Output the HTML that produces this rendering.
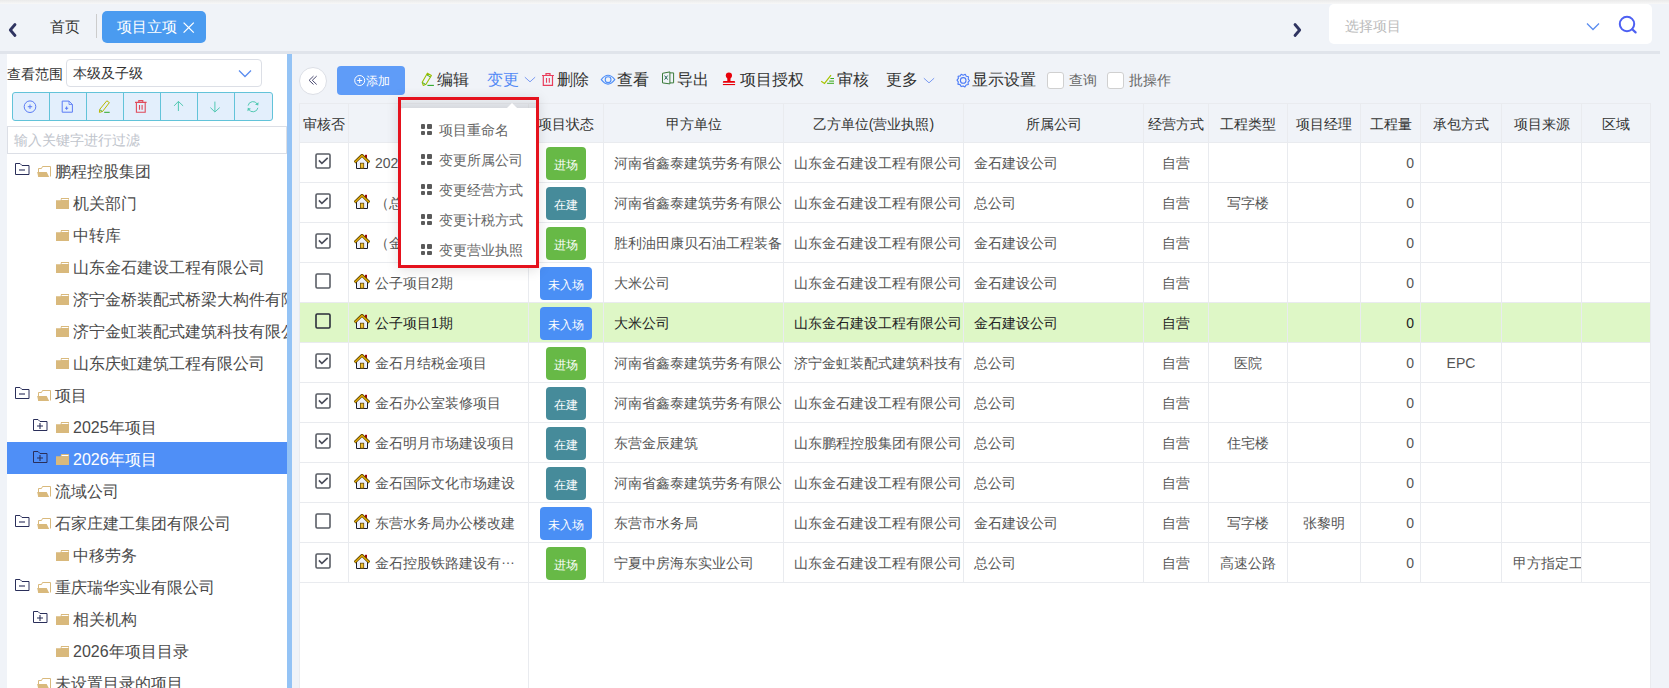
<!DOCTYPE html><html><head><meta charset="utf-8"><style>
*{box-sizing:border-box;margin:0;padding:0}
html,body{width:1669px;height:688px;overflow:hidden}
body{background:#f0f3f8;font-family:"Liberation Sans",sans-serif;color:#333;position:relative}
.abs{position:absolute}
svg{display:block}
#topstrip{left:0;top:0;width:1669px;height:4px;background:linear-gradient(#eaeaea,#f8f8f8)}
#sep{left:0;top:51px;width:1660px;height:3px;background:#e0e4eb}
#home{left:50px;top:16px;font-size:15px;line-height:22px;color:#333}
#vsep{left:96px;top:14px;width:1px;height:24px;background:#ccc}
#tab{left:102px;top:11px;width:104px;height:32px;background:#4a9bf0;border-radius:5px;color:#fff;font-size:15px;line-height:32px;padding-left:15px}
#search{left:1329px;top:4px;width:323px;height:40px;background:#fff;border-radius:5px}
#search .ph{position:absolute;left:16px;top:11px;font-size:14px;line-height:22px;color:#bbb}
#left{left:7px;top:54px;width:280px;height:634px;background:#fff;overflow:hidden}
#splitter{left:287px;top:54px;width:5px;height:634px;background:#94c3f5}
.lab{position:absolute;left:0.2px;font-size:13.6px;line-height:20px;color:#333}
#sel{left:59px;top:5px;width:196px;height:28px;border:1px solid #dcdfe6;border-radius:4px;background:#fff}
#sel .v{position:absolute;left:6px;top:3px;font-size:14px;line-height:20px;color:#333}
#btns{left:5px;top:38px;width:261px;height:29px;border:1px solid #62c3d9;border-radius:3px;background:#e3effc;display:flex}
#btns div{width:37px;height:27px;border-right:1px solid #62c3d9;position:relative}
#btns div:last-child{border-right:none}
#btns svg{position:absolute;left:11px;top:6px;overflow:visible}
#filter{left:0;top:72px;width:280px;height:28px;border:1px solid #dcdfe6;background:#fff}
#filter span{position:absolute;left:6px;top:3px;font-size:14px;line-height:20px;color:#c0c4cc}
.tree{position:absolute;left:0;top:100px;width:280px}
.tn{position:relative;height:32px;font-size:16px;line-height:32px;color:#4a4a4a;white-space:nowrap}
.tn.on{background:#4f8ff7;color:#fff}
.tn .t{position:absolute;top:1.6px}
.tn svg{position:absolute}
.tb{position:absolute;font-size:16px;line-height:22px;color:#333;white-space:nowrap}
.tbi{position:absolute}
#grid{left:299px;top:103px;width:1352px;height:585px;background:#fff}
.hl{position:absolute;height:1px;background:#e9ebef}
.vl{position:absolute;width:1px;background:#e9ebef}
.cell{position:absolute;height:39px;font-size:14px;line-height:39px;color:#555;white-space:nowrap;overflow:hidden}
.hd{color:#333}
.badge{position:absolute;height:33px;border-radius:4px;color:#fff;font-size:12px;font-weight:500;line-height:36px;text-align:center}
.g{background:#67b946}.tl{background:#468b9a}.bl{background:#4a8ff5}
.cb{position:absolute;width:15px;height:15px;border:2px solid #5d5d5d;border-radius:2px;background:#fff}
#popup{left:398px;top:97px;width:141px;height:171px}
.mi{position:absolute;left:40.5px;font-size:14px;line-height:20px;color:#666;white-space:nowrap}
.gi{position:absolute;left:22.5px;width:11px;height:11px}
.gi i{position:absolute;width:4.5px;height:4.5px;background:#5a5a5a;border-radius:1px}
</style></head><body>
<div id="topstrip" class="abs"></div>
<svg class="abs" style="left:8px;top:22px" width="10" height="16" viewBox="0 0 10 16"><path d="M7 2.5 L2.3 8 L7 13.5" stroke="#2f3461" stroke-width="2.8" fill="none" stroke-linecap="round" stroke-linejoin="round"/></svg>
<div id="home" class="abs">首页</div><div id="vsep" class="abs"></div>
<div id="tab" class="abs">项目立项<svg class="abs" style="left:81px;top:11px" width="12" height="12" viewBox="0 0 12 12"><path d="M0.6 0.6L10.8 10.6M10.8 0.6L0.6 10.6" stroke="#fff" stroke-width="1.3"/></svg></div>
<svg class="abs" style="left:1292px;top:22px" width="10" height="16" viewBox="0 0 10 16"><path d="M3 2.5 L7.7 8 L3 13.5" stroke="#2f3461" stroke-width="2.8" fill="none" stroke-linecap="round" stroke-linejoin="round"/></svg>
<div id="search" class="abs"><span class="ph">选择项目</span><svg class="abs" style="left:257px;top:18px" width="14" height="9" viewBox="0 0 14 9"><path d="M1 1.5 L7 7.5 L13 1.5" stroke="#5b8def" stroke-width="1.3" fill="none"/></svg><svg class="abs" style="left:289px;top:11px" width="20" height="20" viewBox="0 0 20 20"><circle cx="9" cy="9" r="7.2" stroke="#4d60f2" stroke-width="2" fill="none"/><path d="M14.2 14.2 L17.6 17.4" stroke="#4d60f2" stroke-width="2.2" stroke-linecap="round"/></svg></div>
<div id="sep" class="abs"></div>
<div id="left" class="abs">
<div class="lab" style="top:11px">查看范围</div>
<div id="sel" class="abs"><span class="v">本级及子级</span><svg class="abs" style="left:171px;top:9px" width="14" height="9" viewBox="0 0 14 9"><path d="M1 1.5 L7 7.5 L13 1.5" stroke="#5b8def" stroke-width="1.3" fill="none"/></svg></div>
<div id="btns" class="abs">
<div><svg width="16" height="16" viewBox="0 0 16 16"><circle cx="6" cy="7.7" r="5.8" stroke="#5b7cf5" stroke-width="1" fill="none"/><path d="M6 5.5V9.9M3.8 7.7H8.2" stroke="#5b7cf5" stroke-width="1"/></svg></div>
<div><svg width="16" height="16" viewBox="0 0 16 16"><path d="M1.2 2.1H8L11.4 5.5V13.2H1.2Z" stroke="#5b7cf5" stroke-width="1" fill="none" stroke-linejoin="round"/><path d="M8 2.1V5.5H11.4" stroke="#5b7cf5" stroke-width=".8" fill="none"/><path d="M5.6 7.6V10.8M4 9.2H7.2" stroke="#5b7cf5" stroke-width="1.1"/></svg></div>
<div><svg width="16" height="16" viewBox="0 0 16 16"><path d="M8.8 1.8L11.4 3.6L4.6 12.4L1.4 13.4L1.7 10.4Z" stroke="#b8b800" stroke-width="1" fill="none" stroke-linejoin="round"/><path d="M1.9 10.8L4.3 12.4" stroke="#3aa82a" stroke-width=".9"/><path d="M6.2 13.3H11.7" stroke="#2ea82a" stroke-width="1"/></svg></div>
<div><svg width="16" height="16" viewBox="0 0 16 16"><path d="M0 3.4H11.6M3.8 3.4V1.6H7.8V3.4" stroke="#e04a5a" stroke-width="1.1" fill="none"/><path d="M1.4 3.4V13.2H10.2V3.4" stroke="#e04a5a" stroke-width="1.1" fill="none"/><path d="M4.5 6v4.8M7.1 6v4.8" stroke="#e04a5a" stroke-width="1.1"/></svg></div>
<div><svg width="16" height="16" viewBox="0 0 16 16"><path d="M6.4 2.4V12M2.1 6.9L6.4 2.4L11.1 6.9" stroke="#52c9b3" stroke-width="1" fill="none"/></svg></div>
<div><svg width="16" height="16" viewBox="0 0 16 16"><path d="M5.9 2.6V12.8M1.4 8.6L5.9 13L10.7 8.6" stroke="#52c9b3" stroke-width="1" fill="none"/></svg></div>
<div><svg width="16" height="16" viewBox="0 0 16 16"><path d="M2.1 6.6A5 5 0 0 1 11.4 5.2M11.9 8.8A5 5 0 0 1 2.6 10.2" stroke="#52c9b3" stroke-width="1" fill="none"/><path d="M12.6 3.2L12.2 6.6L9 5.6ZM1.4 12.2L1.8 8.8L5 9.8Z" fill="#52c9b3"/></svg></div>
</div>
<div id="filter" class="abs"><span>输入关键字进行过滤</span></div>
<div class="tree">
<div class="tn"><svg style="left:8px;top:9px" width="15" height="13" viewBox="0 0 15 13"><path d="M0.5 0.5h4.5l2 2h7v9h-13.5z" stroke="#2a2f5a" stroke-width="1" fill="none"/><path d="M4 7h6" stroke="#2a2f5a" stroke-width="1.1"/></svg><svg style="left:30px;top:11px" width="15" height="13" viewBox="0 0 15 13"><path d="M1.5 11.5V3.5H4.5L5.5 1.5H13.5V11.5" stroke="#d9b97c" stroke-width="1" fill="none"/><path d="M0.2 7H9.7L12.2 11.9H1.2Z" fill="#d9b97c"/></svg><span class="t" style="left:48px">鹏程控股集团</span></div>
<div class="tn"><svg style="left:49px;top:12px" width="13" height="11" viewBox="0 0 13 11"><path d="M0 2.2H4.6L5 0H13V11H0Z" fill="#d9b97c"/><path d="M5.6 1.5H12.4" stroke="#fff" stroke-width="1"/></svg><span class="t" style="left:66px">机关部门</span></div>
<div class="tn"><svg style="left:49px;top:12px" width="13" height="11" viewBox="0 0 13 11"><path d="M0 2.2H4.6L5 0H13V11H0Z" fill="#d9b97c"/><path d="M5.6 1.5H12.4" stroke="#fff" stroke-width="1"/></svg><span class="t" style="left:66px">中转库</span></div>
<div class="tn"><svg style="left:49px;top:12px" width="13" height="11" viewBox="0 0 13 11"><path d="M0 2.2H4.6L5 0H13V11H0Z" fill="#d9b97c"/><path d="M5.6 1.5H12.4" stroke="#fff" stroke-width="1"/></svg><span class="t" style="left:66px">山东金石建设工程有限公司</span></div>
<div class="tn"><svg style="left:49px;top:12px" width="13" height="11" viewBox="0 0 13 11"><path d="M0 2.2H4.6L5 0H13V11H0Z" fill="#d9b97c"/><path d="M5.6 1.5H12.4" stroke="#fff" stroke-width="1"/></svg><span class="t" style="left:66px">济宁金桥装配式桥梁大构件有限公司</span></div>
<div class="tn"><svg style="left:49px;top:12px" width="13" height="11" viewBox="0 0 13 11"><path d="M0 2.2H4.6L5 0H13V11H0Z" fill="#d9b97c"/><path d="M5.6 1.5H12.4" stroke="#fff" stroke-width="1"/></svg><span class="t" style="left:66px">济宁金虹装配式建筑科技有限公司</span></div>
<div class="tn"><svg style="left:49px;top:12px" width="13" height="11" viewBox="0 0 13 11"><path d="M0 2.2H4.6L5 0H13V11H0Z" fill="#d9b97c"/><path d="M5.6 1.5H12.4" stroke="#fff" stroke-width="1"/></svg><span class="t" style="left:66px">山东庆虹建筑工程有限公司</span></div>
<div class="tn"><svg style="left:8px;top:9px" width="15" height="13" viewBox="0 0 15 13"><path d="M0.5 0.5h4.5l2 2h7v9h-13.5z" stroke="#2a2f5a" stroke-width="1" fill="none"/><path d="M4 7h6" stroke="#2a2f5a" stroke-width="1.1"/></svg><svg style="left:30px;top:11px" width="15" height="13" viewBox="0 0 15 13"><path d="M1.5 11.5V3.5H4.5L5.5 1.5H13.5V11.5" stroke="#d9b97c" stroke-width="1" fill="none"/><path d="M0.2 7H9.7L12.2 11.9H1.2Z" fill="#d9b97c"/></svg><span class="t" style="left:48px">项目</span></div>
<div class="tn"><svg style="left:26px;top:9px" width="15" height="13" viewBox="0 0 15 13"><path d="M0.5 0.5h4.5l2 2h7v9h-13.5z" stroke="#2a2f5a" stroke-width="1" fill="none"/><path d="M4 7h6M7 4v6" stroke="#2a2f5a" stroke-width="1.1"/></svg><svg style="left:49px;top:12px" width="13" height="11" viewBox="0 0 13 11"><path d="M0 2.2H4.6L5 0H13V11H0Z" fill="#d9b97c"/><path d="M5.6 1.5H12.4" stroke="#fff" stroke-width="1"/></svg><span class="t" style="left:66px">2025年项目</span></div>
<div class="tn on"><svg style="left:26px;top:9px" width="15" height="13" viewBox="0 0 15 13"><path d="M0.5 0.5h4.5l2 2h7v9h-13.5z" stroke="#2a2f5a" stroke-width="1" fill="none"/><path d="M4 7h6M7 4v6" stroke="#2a2f5a" stroke-width="1.1"/></svg><svg style="left:49px;top:12px" width="13" height="11" viewBox="0 0 13 11"><path d="M0 2.2H4.6L5 0H13V11H0Z" fill="#d9b97c"/><path d="M5.6 1.5H12.4" stroke="#fff" stroke-width="1"/></svg><span class="t" style="left:66px">2026年项目</span></div>
<div class="tn"><svg style="left:30px;top:11px" width="15" height="13" viewBox="0 0 15 13"><path d="M1.5 11.5V3.5H4.5L5.5 1.5H13.5V11.5" stroke="#d9b97c" stroke-width="1" fill="none"/><path d="M0.2 7H9.7L12.2 11.9H1.2Z" fill="#d9b97c"/></svg><span class="t" style="left:48px">流域公司</span></div>
<div class="tn"><svg style="left:8px;top:9px" width="15" height="13" viewBox="0 0 15 13"><path d="M0.5 0.5h4.5l2 2h7v9h-13.5z" stroke="#2a2f5a" stroke-width="1" fill="none"/><path d="M4 7h6" stroke="#2a2f5a" stroke-width="1.1"/></svg><svg style="left:30px;top:11px" width="15" height="13" viewBox="0 0 15 13"><path d="M1.5 11.5V3.5H4.5L5.5 1.5H13.5V11.5" stroke="#d9b97c" stroke-width="1" fill="none"/><path d="M0.2 7H9.7L12.2 11.9H1.2Z" fill="#d9b97c"/></svg><span class="t" style="left:48px">石家庄建工集团有限公司</span></div>
<div class="tn"><svg style="left:49px;top:12px" width="13" height="11" viewBox="0 0 13 11"><path d="M0 2.2H4.6L5 0H13V11H0Z" fill="#d9b97c"/><path d="M5.6 1.5H12.4" stroke="#fff" stroke-width="1"/></svg><span class="t" style="left:66px">中移劳务</span></div>
<div class="tn"><svg style="left:8px;top:9px" width="15" height="13" viewBox="0 0 15 13"><path d="M0.5 0.5h4.5l2 2h7v9h-13.5z" stroke="#2a2f5a" stroke-width="1" fill="none"/><path d="M4 7h6" stroke="#2a2f5a" stroke-width="1.1"/></svg><svg style="left:30px;top:11px" width="15" height="13" viewBox="0 0 15 13"><path d="M1.5 11.5V3.5H4.5L5.5 1.5H13.5V11.5" stroke="#d9b97c" stroke-width="1" fill="none"/><path d="M0.2 7H9.7L12.2 11.9H1.2Z" fill="#d9b97c"/></svg><span class="t" style="left:48px">重庆瑞华实业有限公司</span></div>
<div class="tn"><svg style="left:26px;top:9px" width="15" height="13" viewBox="0 0 15 13"><path d="M0.5 0.5h4.5l2 2h7v9h-13.5z" stroke="#2a2f5a" stroke-width="1" fill="none"/><path d="M4 7h6M7 4v6" stroke="#2a2f5a" stroke-width="1.1"/></svg><svg style="left:49px;top:12px" width="13" height="11" viewBox="0 0 13 11"><path d="M0 2.2H4.6L5 0H13V11H0Z" fill="#d9b97c"/><path d="M5.6 1.5H12.4" stroke="#fff" stroke-width="1"/></svg><span class="t" style="left:66px">相关机构</span></div>
<div class="tn"><svg style="left:49px;top:12px" width="13" height="11" viewBox="0 0 13 11"><path d="M0 2.2H4.6L5 0H13V11H0Z" fill="#d9b97c"/><path d="M5.6 1.5H12.4" stroke="#fff" stroke-width="1"/></svg><span class="t" style="left:66px">2026年项目目录</span></div>
<div class="tn"><svg style="left:30px;top:11px" width="15" height="13" viewBox="0 0 15 13"><path d="M1.5 11.5V3.5H4.5L5.5 1.5H13.5V11.5" stroke="#d9b97c" stroke-width="1" fill="none"/><path d="M0.2 7H9.7L12.2 11.9H1.2Z" fill="#d9b97c"/></svg><span class="t" style="left:48px">未设置目录的项目</span></div>
</div></div>
<div id="splitter" class="abs"></div>
<div class="abs" style="left:299px;top:67px;width:28px;height:28px;border:1px solid #dcdfe6;border-radius:50%;background:#fff"></div><svg class="abs" style="left:304px;top:70px" width="16" height="16" viewBox="0 0 16 16"><path d="M9.5 6.1L5.1 10.3L9.5 14.5M12.7 6.1L8.3 10.3L12.7 14.5" stroke="#4a4a70" stroke-width="1" fill="none"/></svg>
<div class="abs" style="left:337px;top:66px;width:68px;height:29px;background:#5f9cf8;border-radius:4px"><svg class="abs" style="left:16px;top:8px" width="13" height="13" viewBox="0 0 13 13"><circle cx="6.7" cy="6.5" r="5" stroke="#fff" stroke-width="1" fill="none"/><path d="M6.7 4v5M4.2 6.5h5" stroke="#fff" stroke-width="1"/></svg><span class="abs" style="left:28.5px;top:6px;font-size:12px;line-height:18px;color:#fff">添加</span></div>
<svg class="tbi" style="left:418px;top:70px" width="18" height="18" viewBox="0 0 18 18"><path d="M9.4 3.2L13.4 5.5L8 14.2L5.2 15.4L4.2 12.3Z" stroke="#9cc000" stroke-width="1.1" fill="none" stroke-linejoin="round"/><path d="M8.9 4.9L12.4 6.9M4.6 12.6L7.4 14.3" stroke="#3aa82a" stroke-width="1"/><path d="M9.4 15.4H15.9" stroke="#2ea82a" stroke-width="1.1"/></svg>
<span class="tb" style="left:437px;top:69px;color:#333;font-size:16px">编辑</span>
<span class="tb" style="left:486.5px;top:69px;color:#5088f5;font-size:16px">变更</span>
<svg class="abs" style="left:524px;top:76px" width="12" height="7" viewBox="0 0 14 9" preserveAspectRatio="none"><path d="M1 1.5 L7 7.5 L13 1.5" stroke="#6b8ff0" stroke-width="1.1" fill="none"/></svg>
<svg class="tbi" style="left:538px;top:70px" width="18" height="18" viewBox="0 0 18 18"><path d="M4 5.5H15.9M8 5.5V3.7H12V5.5" stroke="#e83e5c" stroke-width="1.2" fill="none"/><path d="M5.3 5.5V15.3H14.5V5.5" stroke="#e83e5c" stroke-width="1.2" fill="none"/><path d="M8.5 8v4.8M11.3 8v4.8" stroke="#e83e5c" stroke-width="1.1"/></svg>
<span class="tb" style="left:557px;top:69px;color:#333;font-size:16px">删除</span>
<svg class="tbi" style="left:600px;top:70px" width="17" height="17" viewBox="0 0 17 17"><path d="M1.3 9.7Q8 0.9 14.8 9.7Q8 18.5 1.3 9.7Z" stroke="#4d8ef8" stroke-width="1.1" fill="none"/><circle cx="8.1" cy="9.7" r="2.9" stroke="#4d8ef8" stroke-width="1.1" fill="none"/></svg>
<span class="tb" style="left:617px;top:69px;color:#333;font-size:16px">查看</span>
<svg class="tbi" style="left:660px;top:70px" width="16" height="16" viewBox="0 0 16 16"><path d="M2.5 3.3L9.9 1.9V13.9L2.5 12.9Z" stroke="#3a7a3a" stroke-width="1" fill="none"/><path d="M9.9 2.9H13.6V12.9H9.9" stroke="#3a7a3a" stroke-width="1" fill="none"/><path d="M4.6 5.6L7.6 9.6M7.6 5.6L4.6 9.6" stroke="#2a6a5a" stroke-width="1"/></svg>
<span class="tb" style="left:677px;top:69px;color:#333;font-size:16px">导出</span>
<svg class="tbi" style="left:720px;top:70px" width="17" height="17" viewBox="0 0 17 17"><circle cx="8.9" cy="5.5" r="3.1" fill="#e8000a"/><path d="M7.3 7.5H10.5V10.9H14.1Q15.1 10.9 15.1 11.9V12.8H2.9V11.9Q2.9 10.9 3.9 10.9H7.3Z" fill="#e8000a"/><path d="M2.9 14H15.1V15.1H2.9Z" fill="#e8000a"/></svg>
<span class="tb" style="left:740px;top:69px;color:#333;font-size:16px">项目授权</span>
<svg class="tbi" style="left:820px;top:70px" width="16" height="16" viewBox="0 0 16 16"><path d="M1.2 11.2L4.5 13.4L11 5.2" stroke="#a8c400" stroke-width="1.2" fill="none"/><path d="M10.4 8.5H14M9.2 11.1H14M7.1 13.3H14" stroke="#3aaa1a" stroke-width="1"/></svg>
<span class="tb" style="left:837px;top:69px;color:#333;font-size:16px">审核</span>
<span class="tb" style="left:886px;top:69px;color:#333;font-size:16px">更多</span>
<svg class="abs" style="left:923px;top:77px" width="12" height="7" viewBox="0 0 14 9" preserveAspectRatio="none"><path d="M1 1.5 L7 7.5 L13 1.5" stroke="#6b8ff0" stroke-width="1.1" fill="none"/></svg>
<svg class="tbi" style="left:951px;top:68px" width="24" height="24" viewBox="0 0 24 24"><path d="M10.2 6.3L12.2 7.2L14.2 6.3L15.3 8.3L17.5 8.7L17.2 11L18.4 12.6L17 14.3L17.3 16.5L15.1 17L13.9 18.9L12.1 17.9L10.1 18.6L9.1 16.6L6.9 16.1L7.3 13.9L6 12.2L7.4 10.4L7.1 8.3L9.3 7.9Z" stroke="#4a7af8" stroke-width="1.1" fill="none" stroke-linejoin="round"/><circle cx="12.2" cy="12.4" r="2.8" stroke="#4a7af8" stroke-width="1.1" fill="none"/></svg>
<span class="tb" style="left:972px;top:69px;color:#333;font-size:16px">显示设置</span>
<div class="abs" style="left:1047px;top:72px;width:17px;height:17px;border:1px solid #d0d0d0;border-radius:3px;background:#fff"></div>
<span class="tb" style="left:1069px;top:69px;color:#666;font-size:14px">查询</span>
<div class="abs" style="left:1107px;top:72px;width:17px;height:17px;border:1px solid #d0d0d0;border-radius:3px;background:#fff"></div>
<span class="tb" style="left:1129px;top:69px;color:#666;font-size:14px">批操作</span>
<div id="grid" class="abs">
<div class="abs" style="left:0;top:0;width:1352px;height:40px;background:#f0f3f8"></div>
<div class="abs" style="left:0;top:199px;width:1352px;height:40px;background:#def7c6"></div>
<div class="hl" style="left:0;top:0px;width:1352px"></div>
<div class="hl" style="left:0;top:39px;width:1352px"></div>
<div class="hl" style="left:0;top:79px;width:1352px"></div>
<div class="hl" style="left:0;top:119px;width:1352px"></div>
<div class="hl" style="left:0;top:159px;width:1352px"></div>
<div class="hl" style="left:0;top:199px;width:1352px"></div>
<div class="hl" style="left:0;top:239px;width:1352px"></div>
<div class="hl" style="left:0;top:279px;width:1352px"></div>
<div class="hl" style="left:0;top:319px;width:1352px"></div>
<div class="hl" style="left:0;top:359px;width:1352px"></div>
<div class="hl" style="left:0;top:399px;width:1352px"></div>
<div class="hl" style="left:0;top:439px;width:1352px"></div>
<div class="hl" style="left:0;top:479px;width:1352px"></div>
<div class="vl" style="left:0px;top:0;height:585px"></div>
<div class="vl" style="left:49px;top:0;height:480px"></div>
<div class="vl" style="left:229px;top:0;height:585px"></div>
<div class="vl" style="left:304px;top:0;height:480px"></div>
<div class="vl" style="left:484px;top:0;height:480px"></div>
<div class="vl" style="left:664px;top:0;height:480px"></div>
<div class="vl" style="left:844px;top:0;height:480px"></div>
<div class="vl" style="left:909px;top:0;height:480px"></div>
<div class="vl" style="left:988px;top:0;height:480px"></div>
<div class="vl" style="left:1061px;top:0;height:480px"></div>
<div class="vl" style="left:1121px;top:0;height:480px"></div>
<div class="vl" style="left:1202px;top:0;height:480px"></div>
<div class="vl" style="left:1282px;top:0;height:480px"></div>
<div class="vl" style="left:1351px;top:0;height:585px"></div>
<div class="vl" style="left:1351px;top:0;height:585px"></div>
<div class="abs" style="left:1651px;top:103px;width:1px;height:585px;background:#e9ebef"></div>
</div>
<div class="cell hd" style="left:300px;width:48px;top:104.5px;text-align:center;padding:0 0px;">审核否</div>
<div class="cell hd" style="left:349px;width:179px;top:104.5px;text-align:center;padding:0 0px;"></div>
<div class="cell hd" style="left:529px;width:74px;top:104.5px;text-align:center;padding:0 0px;">项目状态</div>
<div class="cell hd" style="left:604px;width:179px;top:104.5px;text-align:center;padding:0 0px;">甲方单位</div>
<div class="cell hd" style="left:784px;width:179px;top:104.5px;text-align:center;padding:0 0px;">乙方单位(营业执照)</div>
<div class="cell hd" style="left:964px;width:179px;top:104.5px;text-align:center;padding:0 0px;">所属公司</div>
<div class="cell hd" style="left:1144px;width:64px;top:104.5px;text-align:center;padding:0 0px;">经营方式</div>
<div class="cell hd" style="left:1209px;width:78px;top:104.5px;text-align:center;padding:0 0px;">工程类型</div>
<div class="cell hd" style="left:1288px;width:72px;top:104.5px;text-align:center;padding:0 0px;">项目经理</div>
<div class="cell hd" style="left:1361px;width:59px;top:104.5px;text-align:center;padding:0 0px;">工程量</div>
<div class="cell hd" style="left:1421px;width:80px;top:104.5px;text-align:center;padding:0 0px;">承包方式</div>
<div class="cell hd" style="left:1502px;width:79px;top:104.5px;text-align:center;padding:0 0px;">项目来源</div>
<div class="cell hd" style="left:1582px;width:68px;top:104.5px;text-align:center;padding:0 0px;">区域</div>
<svg class="abs" style="left:315px;top:153px" width="16" height="16" viewBox="0 0 16 16"><rect x="1" y="1" width="14" height="14" rx="1.2" stroke="#5a5e66" stroke-width="1.6" fill="none"/><path d="M3.9 7.4l3 3 5.8-5.6" stroke="#4a4d5a" stroke-width="1.6" fill="none"/></svg>
<svg class="abs" style="left:354px;top:154px" width="16" height="16" viewBox="0 0 16 16"><rect x="11" y="0.8" width="2" height="4.2" fill="#9a0010"/><path d="M2.5 8L8 3L13.5 8V14.5H2.5Z" fill="#eef0fa"/><path d="M2.5 8V14.5H13.5V8" stroke="#1a1d2a" stroke-width="1" fill="none"/><rect x="6.4" y="9.2" width="3.3" height="5" fill="#f0c030" stroke="#6a4a00" stroke-width="0.8"/><path d="M0.6 8.4L8 1.3L15.4 8.4" stroke="#5a4000" stroke-width="2.9" fill="none" stroke-linejoin="round"/><path d="M0.9 8.2L8 1.5L15.1 8.2" stroke="#e2aa00" stroke-width="1.5" fill="none"/></svg>
<div class="cell " style="left:350px;width:178px;top:144px;text-align:left;padding:0 0px;left:375px;width:153px;">2026年项目测试</div>
<div class="badge g" style="left:546px;top:147px;width:40px">进场</div>
<div class="cell " style="left:604px;width:178px;top:144px;text-align:left;padding:0 10px;text-overflow:clip">河南省鑫泰建筑劳务有限公司</div>
<div class="cell " style="left:784px;width:178px;top:144px;text-align:left;padding:0 10px;">山东金石建设工程有限公司</div>
<div class="cell " style="left:964px;width:179px;top:144px;text-align:left;padding:0 10px;">金石建设公司</div>
<div class="cell " style="left:1144px;width:64px;top:144px;text-align:center;padding:0 0px;">自营</div>
<div class="cell " style="left:1209px;width:78px;top:144px;text-align:center;padding:0 0px;"></div>
<div class="cell " style="left:1288px;width:72px;top:144px;text-align:center;padding:0 0px;"></div>
<div class="cell " style="left:1361px;width:59px;top:144px;text-align:right;padding:0 6px;">0</div>
<div class="cell " style="left:1421px;width:80px;top:144px;text-align:center;padding:0 0px;"></div>
<div class="cell " style="left:1502px;width:79px;top:144px;text-align:left;padding:0 11px;"></div>
<div class="cell " style="left:1582px;width:68px;top:144px;text-align:center;padding:0 0px;"></div>
<svg class="abs" style="left:315px;top:193px" width="16" height="16" viewBox="0 0 16 16"><rect x="1" y="1" width="14" height="14" rx="1.2" stroke="#5a5e66" stroke-width="1.6" fill="none"/><path d="M3.9 7.4l3 3 5.8-5.6" stroke="#4a4d5a" stroke-width="1.6" fill="none"/></svg>
<svg class="abs" style="left:354px;top:194px" width="16" height="16" viewBox="0 0 16 16"><rect x="11" y="0.8" width="2" height="4.2" fill="#9a0010"/><path d="M2.5 8L8 3L13.5 8V14.5H2.5Z" fill="#eef0fa"/><path d="M2.5 8V14.5H13.5V8" stroke="#1a1d2a" stroke-width="1" fill="none"/><rect x="6.4" y="9.2" width="3.3" height="5" fill="#f0c030" stroke="#6a4a00" stroke-width="0.8"/><path d="M0.6 8.4L8 1.3L15.4 8.4" stroke="#5a4000" stroke-width="2.9" fill="none" stroke-linejoin="round"/><path d="M0.9 8.2L8 1.5L15.1 8.2" stroke="#e2aa00" stroke-width="1.5" fill="none"/></svg>
<div class="cell " style="left:350px;width:178px;top:184px;text-align:left;padding:0 0px;left:375px;width:153px;">（总公司）项目</div>
<div class="badge tl" style="left:546px;top:187px;width:40px">在建</div>
<div class="cell " style="left:604px;width:178px;top:184px;text-align:left;padding:0 10px;text-overflow:clip">河南省鑫泰建筑劳务有限公司</div>
<div class="cell " style="left:784px;width:178px;top:184px;text-align:left;padding:0 10px;">山东金石建设工程有限公司</div>
<div class="cell " style="left:964px;width:179px;top:184px;text-align:left;padding:0 10px;">总公司</div>
<div class="cell " style="left:1144px;width:64px;top:184px;text-align:center;padding:0 0px;">自营</div>
<div class="cell " style="left:1209px;width:78px;top:184px;text-align:center;padding:0 0px;">写字楼</div>
<div class="cell " style="left:1288px;width:72px;top:184px;text-align:center;padding:0 0px;"></div>
<div class="cell " style="left:1361px;width:59px;top:184px;text-align:right;padding:0 6px;">0</div>
<div class="cell " style="left:1421px;width:80px;top:184px;text-align:center;padding:0 0px;"></div>
<div class="cell " style="left:1502px;width:79px;top:184px;text-align:left;padding:0 11px;"></div>
<div class="cell " style="left:1582px;width:68px;top:184px;text-align:center;padding:0 0px;"></div>
<svg class="abs" style="left:315px;top:233px" width="16" height="16" viewBox="0 0 16 16"><rect x="1" y="1" width="14" height="14" rx="1.2" stroke="#5a5e66" stroke-width="1.6" fill="none"/><path d="M3.9 7.4l3 3 5.8-5.6" stroke="#4a4d5a" stroke-width="1.6" fill="none"/></svg>
<svg class="abs" style="left:354px;top:234px" width="16" height="16" viewBox="0 0 16 16"><rect x="11" y="0.8" width="2" height="4.2" fill="#9a0010"/><path d="M2.5 8L8 3L13.5 8V14.5H2.5Z" fill="#eef0fa"/><path d="M2.5 8V14.5H13.5V8" stroke="#1a1d2a" stroke-width="1" fill="none"/><rect x="6.4" y="9.2" width="3.3" height="5" fill="#f0c030" stroke="#6a4a00" stroke-width="0.8"/><path d="M0.6 8.4L8 1.3L15.4 8.4" stroke="#5a4000" stroke-width="2.9" fill="none" stroke-linejoin="round"/><path d="M0.9 8.2L8 1.5L15.1 8.2" stroke="#e2aa00" stroke-width="1.5" fill="none"/></svg>
<div class="cell " style="left:350px;width:178px;top:224px;text-align:left;padding:0 0px;left:375px;width:153px;">（金石）项目</div>
<div class="badge g" style="left:546px;top:227px;width:40px">进场</div>
<div class="cell " style="left:604px;width:178px;top:224px;text-align:left;padding:0 10px;text-overflow:clip">胜利油田康贝石油工程装备有限公司</div>
<div class="cell " style="left:784px;width:178px;top:224px;text-align:left;padding:0 10px;">山东金石建设工程有限公司</div>
<div class="cell " style="left:964px;width:179px;top:224px;text-align:left;padding:0 10px;">金石建设公司</div>
<div class="cell " style="left:1144px;width:64px;top:224px;text-align:center;padding:0 0px;">自营</div>
<div class="cell " style="left:1209px;width:78px;top:224px;text-align:center;padding:0 0px;"></div>
<div class="cell " style="left:1288px;width:72px;top:224px;text-align:center;padding:0 0px;"></div>
<div class="cell " style="left:1361px;width:59px;top:224px;text-align:right;padding:0 6px;">0</div>
<div class="cell " style="left:1421px;width:80px;top:224px;text-align:center;padding:0 0px;"></div>
<div class="cell " style="left:1502px;width:79px;top:224px;text-align:left;padding:0 11px;"></div>
<div class="cell " style="left:1582px;width:68px;top:224px;text-align:center;padding:0 0px;"></div>
<svg class="abs" style="left:315px;top:273px" width="16" height="16" viewBox="0 0 16 16"><rect x="1" y="1" width="14" height="14" rx="1.2" stroke="#5a5e66" stroke-width="1.6" fill="none"/></svg>
<svg class="abs" style="left:354px;top:274px" width="16" height="16" viewBox="0 0 16 16"><rect x="11" y="0.8" width="2" height="4.2" fill="#9a0010"/><path d="M2.5 8L8 3L13.5 8V14.5H2.5Z" fill="#eef0fa"/><path d="M2.5 8V14.5H13.5V8" stroke="#1a1d2a" stroke-width="1" fill="none"/><rect x="6.4" y="9.2" width="3.3" height="5" fill="#f0c030" stroke="#6a4a00" stroke-width="0.8"/><path d="M0.6 8.4L8 1.3L15.4 8.4" stroke="#5a4000" stroke-width="2.9" fill="none" stroke-linejoin="round"/><path d="M0.9 8.2L8 1.5L15.1 8.2" stroke="#e2aa00" stroke-width="1.5" fill="none"/></svg>
<div class="cell " style="left:350px;width:178px;top:264px;text-align:left;padding:0 0px;left:375px;width:153px;">公子项目2期</div>
<div class="badge bl" style="left:540px;top:267px;width:52px">未入场</div>
<div class="cell " style="left:604px;width:178px;top:264px;text-align:left;padding:0 10px;text-overflow:clip">大米公司</div>
<div class="cell " style="left:784px;width:178px;top:264px;text-align:left;padding:0 10px;">山东金石建设工程有限公司</div>
<div class="cell " style="left:964px;width:179px;top:264px;text-align:left;padding:0 10px;">金石建设公司</div>
<div class="cell " style="left:1144px;width:64px;top:264px;text-align:center;padding:0 0px;">自营</div>
<div class="cell " style="left:1209px;width:78px;top:264px;text-align:center;padding:0 0px;"></div>
<div class="cell " style="left:1288px;width:72px;top:264px;text-align:center;padding:0 0px;"></div>
<div class="cell " style="left:1361px;width:59px;top:264px;text-align:right;padding:0 6px;">0</div>
<div class="cell " style="left:1421px;width:80px;top:264px;text-align:center;padding:0 0px;"></div>
<div class="cell " style="left:1502px;width:79px;top:264px;text-align:left;padding:0 11px;"></div>
<div class="cell " style="left:1582px;width:68px;top:264px;text-align:center;padding:0 0px;"></div>
<svg class="abs" style="left:315px;top:313px" width="16" height="16" viewBox="0 0 16 16"><rect x="1" y="1" width="14" height="14" rx="1.2" stroke="#2a2d3a" stroke-width="1.6" fill="none"/></svg>
<svg class="abs" style="left:354px;top:314px" width="16" height="16" viewBox="0 0 16 16"><rect x="11" y="0.8" width="2" height="4.2" fill="#9a0010"/><path d="M2.5 8L8 3L13.5 8V14.5H2.5Z" fill="#eef0fa"/><path d="M2.5 8V14.5H13.5V8" stroke="#1a1d2a" stroke-width="1" fill="none"/><rect x="6.4" y="9.2" width="3.3" height="5" fill="#f0c030" stroke="#6a4a00" stroke-width="0.8"/><path d="M0.6 8.4L8 1.3L15.4 8.4" stroke="#5a4000" stroke-width="2.9" fill="none" stroke-linejoin="round"/><path d="M0.9 8.2L8 1.5L15.1 8.2" stroke="#e2aa00" stroke-width="1.5" fill="none"/></svg>
<div class="cell " style="left:350px;width:178px;top:304px;text-align:left;padding:0 0px;left:375px;width:153px;color:#222;">公子项目1期</div>
<div class="badge bl" style="left:540px;top:307px;width:52px">未入场</div>
<div class="cell " style="left:604px;width:178px;top:304px;text-align:left;padding:0 10px;color:#222;text-overflow:clip">大米公司</div>
<div class="cell " style="left:784px;width:178px;top:304px;text-align:left;padding:0 10px;color:#222;">山东金石建设工程有限公司</div>
<div class="cell " style="left:964px;width:179px;top:304px;text-align:left;padding:0 10px;color:#222;">金石建设公司</div>
<div class="cell " style="left:1144px;width:64px;top:304px;text-align:center;padding:0 0px;color:#222;">自营</div>
<div class="cell " style="left:1209px;width:78px;top:304px;text-align:center;padding:0 0px;color:#222;"></div>
<div class="cell " style="left:1288px;width:72px;top:304px;text-align:center;padding:0 0px;color:#222;"></div>
<div class="cell " style="left:1361px;width:59px;top:304px;text-align:right;padding:0 6px;color:#222;">0</div>
<div class="cell " style="left:1421px;width:80px;top:304px;text-align:center;padding:0 0px;color:#222;"></div>
<div class="cell " style="left:1502px;width:79px;top:304px;text-align:left;padding:0 11px;color:#222;"></div>
<div class="cell " style="left:1582px;width:68px;top:304px;text-align:center;padding:0 0px;color:#222;"></div>
<svg class="abs" style="left:315px;top:353px" width="16" height="16" viewBox="0 0 16 16"><rect x="1" y="1" width="14" height="14" rx="1.2" stroke="#5a5e66" stroke-width="1.6" fill="none"/><path d="M3.9 7.4l3 3 5.8-5.6" stroke="#4a4d5a" stroke-width="1.6" fill="none"/></svg>
<svg class="abs" style="left:354px;top:354px" width="16" height="16" viewBox="0 0 16 16"><rect x="11" y="0.8" width="2" height="4.2" fill="#9a0010"/><path d="M2.5 8L8 3L13.5 8V14.5H2.5Z" fill="#eef0fa"/><path d="M2.5 8V14.5H13.5V8" stroke="#1a1d2a" stroke-width="1" fill="none"/><rect x="6.4" y="9.2" width="3.3" height="5" fill="#f0c030" stroke="#6a4a00" stroke-width="0.8"/><path d="M0.6 8.4L8 1.3L15.4 8.4" stroke="#5a4000" stroke-width="2.9" fill="none" stroke-linejoin="round"/><path d="M0.9 8.2L8 1.5L15.1 8.2" stroke="#e2aa00" stroke-width="1.5" fill="none"/></svg>
<div class="cell " style="left:350px;width:178px;top:344px;text-align:left;padding:0 0px;left:375px;width:153px;">金石月结税金项目</div>
<div class="badge g" style="left:546px;top:347px;width:40px">进场</div>
<div class="cell " style="left:604px;width:178px;top:344px;text-align:left;padding:0 10px;text-overflow:clip">河南省鑫泰建筑劳务有限公司</div>
<div class="cell " style="left:784px;width:178px;top:344px;text-align:left;padding:0 10px;">济宁金虹装配式建筑科技有限公司</div>
<div class="cell " style="left:964px;width:179px;top:344px;text-align:left;padding:0 10px;">总公司</div>
<div class="cell " style="left:1144px;width:64px;top:344px;text-align:center;padding:0 0px;">自营</div>
<div class="cell " style="left:1209px;width:78px;top:344px;text-align:center;padding:0 0px;">医院</div>
<div class="cell " style="left:1288px;width:72px;top:344px;text-align:center;padding:0 0px;"></div>
<div class="cell " style="left:1361px;width:59px;top:344px;text-align:right;padding:0 6px;">0</div>
<div class="cell " style="left:1421px;width:80px;top:344px;text-align:center;padding:0 0px;">EPC</div>
<div class="cell " style="left:1502px;width:79px;top:344px;text-align:left;padding:0 11px;"></div>
<div class="cell " style="left:1582px;width:68px;top:344px;text-align:center;padding:0 0px;"></div>
<svg class="abs" style="left:315px;top:393px" width="16" height="16" viewBox="0 0 16 16"><rect x="1" y="1" width="14" height="14" rx="1.2" stroke="#5a5e66" stroke-width="1.6" fill="none"/><path d="M3.9 7.4l3 3 5.8-5.6" stroke="#4a4d5a" stroke-width="1.6" fill="none"/></svg>
<svg class="abs" style="left:354px;top:394px" width="16" height="16" viewBox="0 0 16 16"><rect x="11" y="0.8" width="2" height="4.2" fill="#9a0010"/><path d="M2.5 8L8 3L13.5 8V14.5H2.5Z" fill="#eef0fa"/><path d="M2.5 8V14.5H13.5V8" stroke="#1a1d2a" stroke-width="1" fill="none"/><rect x="6.4" y="9.2" width="3.3" height="5" fill="#f0c030" stroke="#6a4a00" stroke-width="0.8"/><path d="M0.6 8.4L8 1.3L15.4 8.4" stroke="#5a4000" stroke-width="2.9" fill="none" stroke-linejoin="round"/><path d="M0.9 8.2L8 1.5L15.1 8.2" stroke="#e2aa00" stroke-width="1.5" fill="none"/></svg>
<div class="cell " style="left:350px;width:178px;top:384px;text-align:left;padding:0 0px;left:375px;width:153px;">金石办公室装修项目</div>
<div class="badge tl" style="left:546px;top:387px;width:40px">在建</div>
<div class="cell " style="left:604px;width:178px;top:384px;text-align:left;padding:0 10px;text-overflow:clip">河南省鑫泰建筑劳务有限公司</div>
<div class="cell " style="left:784px;width:178px;top:384px;text-align:left;padding:0 10px;">山东金石建设工程有限公司</div>
<div class="cell " style="left:964px;width:179px;top:384px;text-align:left;padding:0 10px;">总公司</div>
<div class="cell " style="left:1144px;width:64px;top:384px;text-align:center;padding:0 0px;">自营</div>
<div class="cell " style="left:1209px;width:78px;top:384px;text-align:center;padding:0 0px;"></div>
<div class="cell " style="left:1288px;width:72px;top:384px;text-align:center;padding:0 0px;"></div>
<div class="cell " style="left:1361px;width:59px;top:384px;text-align:right;padding:0 6px;">0</div>
<div class="cell " style="left:1421px;width:80px;top:384px;text-align:center;padding:0 0px;"></div>
<div class="cell " style="left:1502px;width:79px;top:384px;text-align:left;padding:0 11px;"></div>
<div class="cell " style="left:1582px;width:68px;top:384px;text-align:center;padding:0 0px;"></div>
<svg class="abs" style="left:315px;top:433px" width="16" height="16" viewBox="0 0 16 16"><rect x="1" y="1" width="14" height="14" rx="1.2" stroke="#5a5e66" stroke-width="1.6" fill="none"/><path d="M3.9 7.4l3 3 5.8-5.6" stroke="#4a4d5a" stroke-width="1.6" fill="none"/></svg>
<svg class="abs" style="left:354px;top:434px" width="16" height="16" viewBox="0 0 16 16"><rect x="11" y="0.8" width="2" height="4.2" fill="#9a0010"/><path d="M2.5 8L8 3L13.5 8V14.5H2.5Z" fill="#eef0fa"/><path d="M2.5 8V14.5H13.5V8" stroke="#1a1d2a" stroke-width="1" fill="none"/><rect x="6.4" y="9.2" width="3.3" height="5" fill="#f0c030" stroke="#6a4a00" stroke-width="0.8"/><path d="M0.6 8.4L8 1.3L15.4 8.4" stroke="#5a4000" stroke-width="2.9" fill="none" stroke-linejoin="round"/><path d="M0.9 8.2L8 1.5L15.1 8.2" stroke="#e2aa00" stroke-width="1.5" fill="none"/></svg>
<div class="cell " style="left:350px;width:178px;top:424px;text-align:left;padding:0 0px;left:375px;width:153px;">金石明月市场建设项目</div>
<div class="badge tl" style="left:546px;top:427px;width:40px">在建</div>
<div class="cell " style="left:604px;width:178px;top:424px;text-align:left;padding:0 10px;text-overflow:clip">东营金辰建筑</div>
<div class="cell " style="left:784px;width:178px;top:424px;text-align:left;padding:0 10px;">山东鹏程控股集团有限公司</div>
<div class="cell " style="left:964px;width:179px;top:424px;text-align:left;padding:0 10px;">总公司</div>
<div class="cell " style="left:1144px;width:64px;top:424px;text-align:center;padding:0 0px;">自营</div>
<div class="cell " style="left:1209px;width:78px;top:424px;text-align:center;padding:0 0px;">住宅楼</div>
<div class="cell " style="left:1288px;width:72px;top:424px;text-align:center;padding:0 0px;"></div>
<div class="cell " style="left:1361px;width:59px;top:424px;text-align:right;padding:0 6px;">0</div>
<div class="cell " style="left:1421px;width:80px;top:424px;text-align:center;padding:0 0px;"></div>
<div class="cell " style="left:1502px;width:79px;top:424px;text-align:left;padding:0 11px;"></div>
<div class="cell " style="left:1582px;width:68px;top:424px;text-align:center;padding:0 0px;"></div>
<svg class="abs" style="left:315px;top:473px" width="16" height="16" viewBox="0 0 16 16"><rect x="1" y="1" width="14" height="14" rx="1.2" stroke="#5a5e66" stroke-width="1.6" fill="none"/><path d="M3.9 7.4l3 3 5.8-5.6" stroke="#4a4d5a" stroke-width="1.6" fill="none"/></svg>
<svg class="abs" style="left:354px;top:474px" width="16" height="16" viewBox="0 0 16 16"><rect x="11" y="0.8" width="2" height="4.2" fill="#9a0010"/><path d="M2.5 8L8 3L13.5 8V14.5H2.5Z" fill="#eef0fa"/><path d="M2.5 8V14.5H13.5V8" stroke="#1a1d2a" stroke-width="1" fill="none"/><rect x="6.4" y="9.2" width="3.3" height="5" fill="#f0c030" stroke="#6a4a00" stroke-width="0.8"/><path d="M0.6 8.4L8 1.3L15.4 8.4" stroke="#5a4000" stroke-width="2.9" fill="none" stroke-linejoin="round"/><path d="M0.9 8.2L8 1.5L15.1 8.2" stroke="#e2aa00" stroke-width="1.5" fill="none"/></svg>
<div class="cell " style="left:350px;width:178px;top:464px;text-align:left;padding:0 0px;left:375px;width:153px;">金石国际文化市场建设</div>
<div class="badge tl" style="left:546px;top:467px;width:40px">在建</div>
<div class="cell " style="left:604px;width:178px;top:464px;text-align:left;padding:0 10px;text-overflow:clip">河南省鑫泰建筑劳务有限公司</div>
<div class="cell " style="left:784px;width:178px;top:464px;text-align:left;padding:0 10px;">山东金石建设工程有限公司</div>
<div class="cell " style="left:964px;width:179px;top:464px;text-align:left;padding:0 10px;">总公司</div>
<div class="cell " style="left:1144px;width:64px;top:464px;text-align:center;padding:0 0px;">自营</div>
<div class="cell " style="left:1209px;width:78px;top:464px;text-align:center;padding:0 0px;"></div>
<div class="cell " style="left:1288px;width:72px;top:464px;text-align:center;padding:0 0px;"></div>
<div class="cell " style="left:1361px;width:59px;top:464px;text-align:right;padding:0 6px;">0</div>
<div class="cell " style="left:1421px;width:80px;top:464px;text-align:center;padding:0 0px;"></div>
<div class="cell " style="left:1502px;width:79px;top:464px;text-align:left;padding:0 11px;"></div>
<div class="cell " style="left:1582px;width:68px;top:464px;text-align:center;padding:0 0px;"></div>
<svg class="abs" style="left:315px;top:513px" width="16" height="16" viewBox="0 0 16 16"><rect x="1" y="1" width="14" height="14" rx="1.2" stroke="#5a5e66" stroke-width="1.6" fill="none"/></svg>
<svg class="abs" style="left:354px;top:514px" width="16" height="16" viewBox="0 0 16 16"><rect x="11" y="0.8" width="2" height="4.2" fill="#9a0010"/><path d="M2.5 8L8 3L13.5 8V14.5H2.5Z" fill="#eef0fa"/><path d="M2.5 8V14.5H13.5V8" stroke="#1a1d2a" stroke-width="1" fill="none"/><rect x="6.4" y="9.2" width="3.3" height="5" fill="#f0c030" stroke="#6a4a00" stroke-width="0.8"/><path d="M0.6 8.4L8 1.3L15.4 8.4" stroke="#5a4000" stroke-width="2.9" fill="none" stroke-linejoin="round"/><path d="M0.9 8.2L8 1.5L15.1 8.2" stroke="#e2aa00" stroke-width="1.5" fill="none"/></svg>
<div class="cell " style="left:350px;width:178px;top:504px;text-align:left;padding:0 0px;left:375px;width:153px;">东营水务局办公楼改建</div>
<div class="badge bl" style="left:540px;top:507px;width:52px">未入场</div>
<div class="cell " style="left:604px;width:178px;top:504px;text-align:left;padding:0 10px;text-overflow:clip">东营市水务局</div>
<div class="cell " style="left:784px;width:178px;top:504px;text-align:left;padding:0 10px;">山东金石建设工程有限公司</div>
<div class="cell " style="left:964px;width:179px;top:504px;text-align:left;padding:0 10px;">金石建设公司</div>
<div class="cell " style="left:1144px;width:64px;top:504px;text-align:center;padding:0 0px;">自营</div>
<div class="cell " style="left:1209px;width:78px;top:504px;text-align:center;padding:0 0px;">写字楼</div>
<div class="cell " style="left:1288px;width:72px;top:504px;text-align:center;padding:0 0px;">张黎明</div>
<div class="cell " style="left:1361px;width:59px;top:504px;text-align:right;padding:0 6px;">0</div>
<div class="cell " style="left:1421px;width:80px;top:504px;text-align:center;padding:0 0px;"></div>
<div class="cell " style="left:1502px;width:79px;top:504px;text-align:left;padding:0 11px;"></div>
<div class="cell " style="left:1582px;width:68px;top:504px;text-align:center;padding:0 0px;"></div>
<svg class="abs" style="left:315px;top:553px" width="16" height="16" viewBox="0 0 16 16"><rect x="1" y="1" width="14" height="14" rx="1.2" stroke="#5a5e66" stroke-width="1.6" fill="none"/><path d="M3.9 7.4l3 3 5.8-5.6" stroke="#4a4d5a" stroke-width="1.6" fill="none"/></svg>
<svg class="abs" style="left:354px;top:554px" width="16" height="16" viewBox="0 0 16 16"><rect x="11" y="0.8" width="2" height="4.2" fill="#9a0010"/><path d="M2.5 8L8 3L13.5 8V14.5H2.5Z" fill="#eef0fa"/><path d="M2.5 8V14.5H13.5V8" stroke="#1a1d2a" stroke-width="1" fill="none"/><rect x="6.4" y="9.2" width="3.3" height="5" fill="#f0c030" stroke="#6a4a00" stroke-width="0.8"/><path d="M0.6 8.4L8 1.3L15.4 8.4" stroke="#5a4000" stroke-width="2.9" fill="none" stroke-linejoin="round"/><path d="M0.9 8.2L8 1.5L15.1 8.2" stroke="#e2aa00" stroke-width="1.5" fill="none"/></svg>
<div class="cell " style="left:350px;width:178px;top:544px;text-align:left;padding:0 0px;left:375px;width:153px;">金石控股铁路建设有<span style="position:relative;top:-4px">…</span></div>
<div class="badge g" style="left:546px;top:547px;width:40px">进场</div>
<div class="cell " style="left:604px;width:178px;top:544px;text-align:left;padding:0 10px;text-overflow:clip">宁夏中房海东实业公司</div>
<div class="cell " style="left:784px;width:178px;top:544px;text-align:left;padding:0 10px;">山东金石建设工程有限公司</div>
<div class="cell " style="left:964px;width:179px;top:544px;text-align:left;padding:0 10px;">总公司</div>
<div class="cell " style="left:1144px;width:64px;top:544px;text-align:center;padding:0 0px;">自营</div>
<div class="cell " style="left:1209px;width:78px;top:544px;text-align:center;padding:0 0px;">高速公路</div>
<div class="cell " style="left:1288px;width:72px;top:544px;text-align:center;padding:0 0px;"></div>
<div class="cell " style="left:1361px;width:59px;top:544px;text-align:right;padding:0 6px;">0</div>
<div class="cell " style="left:1421px;width:80px;top:544px;text-align:center;padding:0 0px;"></div>
<div class="cell " style="left:1502px;width:79px;top:544px;text-align:left;padding:0 11px;">甲方指定工程</div>
<div class="cell " style="left:1582px;width:68px;top:544px;text-align:center;padding:0 0px;"></div>
<div id="popup" class="abs">
<div class="abs" style="left:0;top:0;width:141px;height:171px;box-shadow:0 2px 12px rgba(0,0,0,.12)"></div>
<div class="abs" style="left:3px;top:3px;width:135px;height:8px;background:linear-gradient(rgba(0,0,0,.04),rgba(0,0,0,.1))"></div>
<div class="abs" style="left:3px;top:11px;width:135px;height:157px;background:#fff;border-radius:4px 0 0 0"></div>
<div class="abs" style="left:109px;top:8px;width:10px;height:10px;background:#fff;transform:rotate(45deg)"></div>
<div class="gi" style="top:27.0px"><i style="left:0;top:0"></i><i style="left:6.5px;top:0"></i><i style="left:0;top:6.5px"></i><i style="left:6.5px;top:6.5px"></i></div>
<div class="mi" style="top:22.5px">项目重命名</div>
<div class="gi" style="top:57.0px"><i style="left:0;top:0"></i><i style="left:6.5px;top:0"></i><i style="left:0;top:6.5px"></i><i style="left:6.5px;top:6.5px"></i></div>
<div class="mi" style="top:52.5px">变更所属公司</div>
<div class="gi" style="top:87.0px"><i style="left:0;top:0"></i><i style="left:6.5px;top:0"></i><i style="left:0;top:6.5px"></i><i style="left:6.5px;top:6.5px"></i></div>
<div class="mi" style="top:82.5px">变更经营方式</div>
<div class="gi" style="top:117.0px"><i style="left:0;top:0"></i><i style="left:6.5px;top:0"></i><i style="left:0;top:6.5px"></i><i style="left:6.5px;top:6.5px"></i></div>
<div class="mi" style="top:112.5px">变更计税方式</div>
<div class="gi" style="top:147.0px"><i style="left:0;top:0"></i><i style="left:6.5px;top:0"></i><i style="left:0;top:6.5px"></i><i style="left:6.5px;top:6.5px"></i></div>
<div class="mi" style="top:142.5px">变更营业执照</div>
<div class="abs" style="left:0;top:0;width:141px;height:171px;border:3px solid #e5121d"></div>
</div>
</body></html>
